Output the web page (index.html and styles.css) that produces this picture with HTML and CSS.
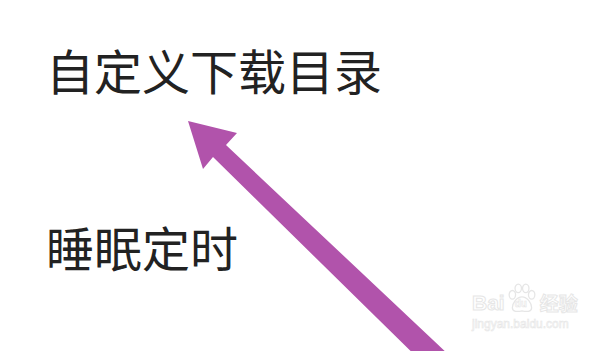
FILE: index.html
```html
<!DOCTYPE html>
<html>
	<head>
		<meta charset="UTF-8">
		<title>自定义下载目录</title>
		<link rel="stylesheet" href="styles.css">
	</head>
	<body>
		<div id="page">
			<!--菜单项-->
			<ul class="menu">
				<li class="item first">自定义下载目录</li>
				<li class="item">睡眠定时</li>
			</ul>

			<!--箭头-->
			<svg class="arrow" width="613" height="351" viewBox="0 0 613 351">
				<polygon fill="#b153ab" points="188,121 237,133 226,145 450,356 432,372 213,157 203,169"/>
			</svg>

			<!--水印-->
			<div class="mark">
				<div class="mark-top">
					<span class="mark-word">Bai</span>
					<span class="paw">
						<svg width="30" height="30" viewBox="0 0 28 28">
							<g fill="none" stroke="#e6e6e6" stroke-width="1.2">
								<ellipse cx="5" cy="11" rx="3" ry="4"/>
								<ellipse cx="10.5" cy="5" rx="3" ry="4"/>
								<ellipse cx="17.5" cy="5" rx="3" ry="4"/>
								<ellipse cx="23" cy="11" rx="3" ry="4"/>
								<path d="M14 13 C9 13 5 19 5 23 C5 27 10 27 14 26 C18 27 23 27 23 23 C23 19 19 13 14 13 Z"/>
							</g>
						</svg>
						<span class="paw-du">du</span>
					</span>
					<span class="mark-cn">经验</span>
				</div>
				<div class="mark-url">jingyan.baidu.com</div>
			</div>
		</div>
	</body>
</html>
```

FILE: styles.css
```css
*{
	margin: 0;
	padding: 0;
}
li{
	list-style: none;
}
body{
	background: white;
	font-family: "Noto Sans CJK SC", "Noto Sans", sans-serif;
}
#page{
	width: 613px;
	height: 351px;
	position: relative;
	overflow: hidden;
}

/*菜单*/
.menu{
	display: flex;
	flex-direction: column;
	gap: 129px;
	padding: 45px 0 0 46px;
}
.item{
	font-size: 48px;
	line-height: 48px;
	color: #222;
}

/*箭头*/
.arrow{
	position: absolute;
	left: 0;
	top: 0;
}

/*水印*/
.mark{
	position: absolute;
	left: 472px;
	top: 283px;
	color: white;
	font-family: "Liberation Sans", sans-serif;
}
.mark-top{
	display: flex;
	align-items: flex-end;
}
.mark-word{
	font-size: 21px;
	font-weight: bold;
	line-height: 21px;
	-webkit-text-stroke: 1px #e6e6e6;
}
.paw{
	position: relative;
	width: 30px;
	height: 30px;
	margin: 0 3px 0 2px;
}
.paw-du{
	position: absolute;
	left: 8px;
	top: 15px;
	font-size: 10px;
	font-weight: bold;
	-webkit-text-stroke: 0.6px #e6e6e6;
}
.mark-cn{
	font-family: "Noto Sans CJK SC", sans-serif;
	font-size: 19px;
	line-height: 21px;
	font-weight: bold;
	-webkit-text-stroke: 1px #e6e6e6;
}
.mark-url{
	font-size: 12px;
	line-height: 14px;
	margin-top: 4px;
	-webkit-text-stroke: 0.6px #e6e6e6;
}
```
